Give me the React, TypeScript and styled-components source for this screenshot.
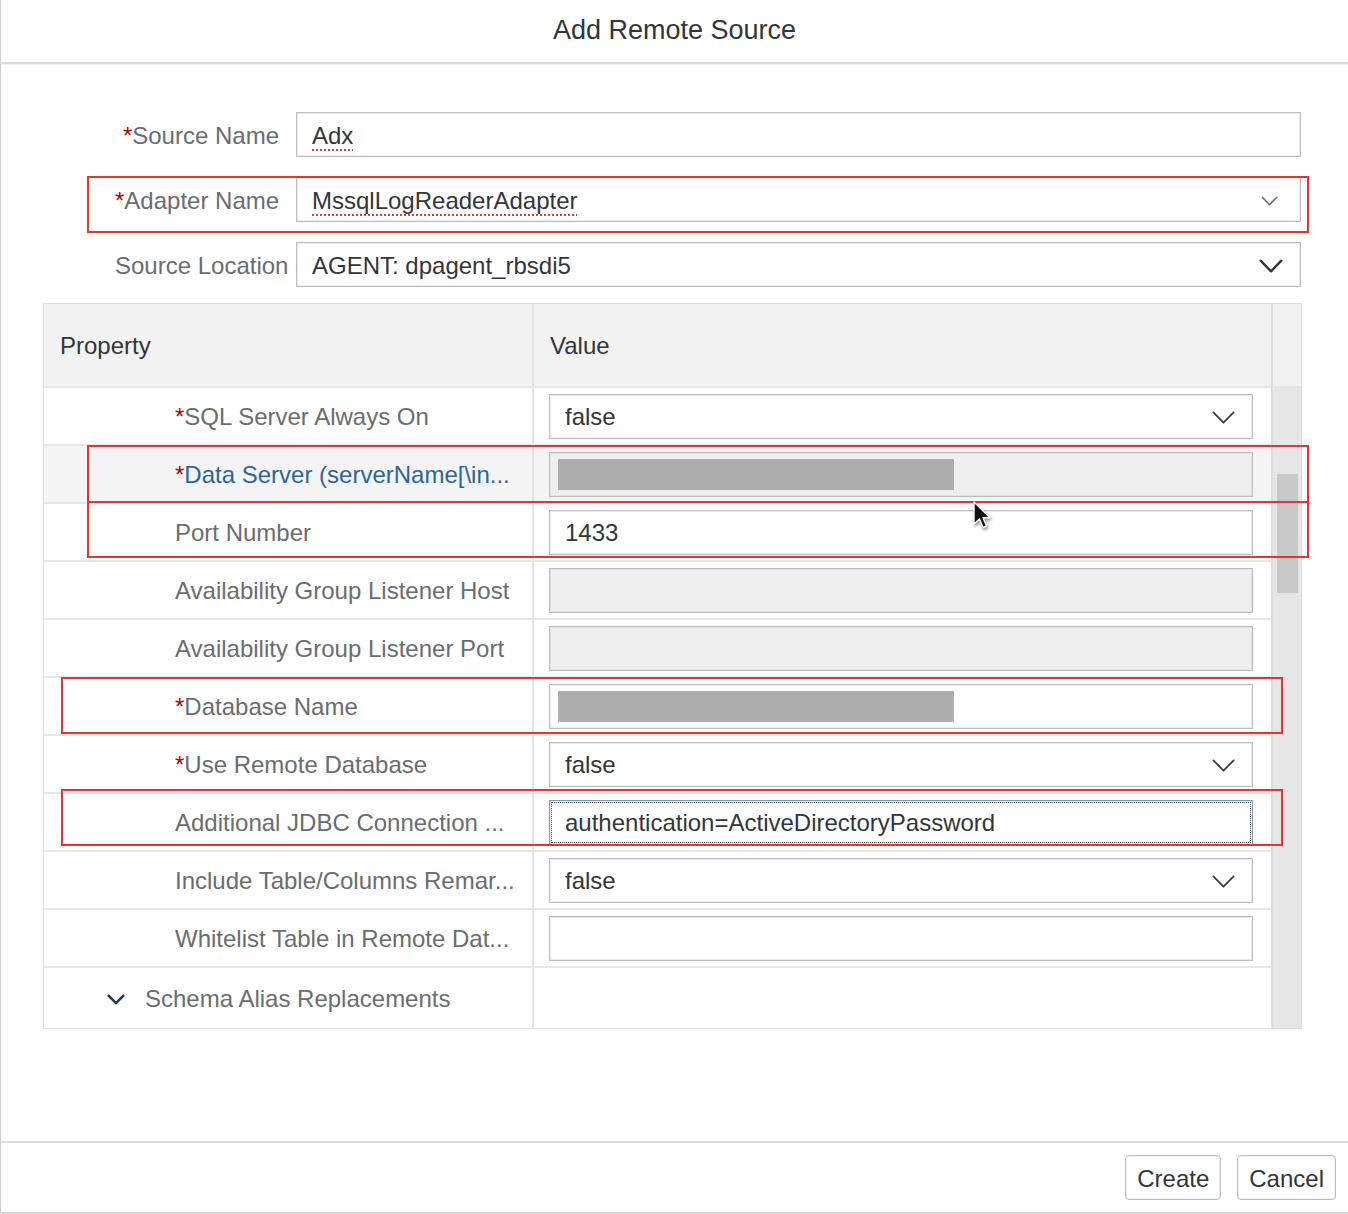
import React from "react";
import styled, { createGlobalStyle } from "styled-components";

const GlobalStyle = createGlobalStyle`
  html, body { margin: 0; padding: 0; background: #ffffff; }
  body { font-family: "Liberation Sans", Arial, sans-serif; }
  * { box-sizing: border-box; }
`;

const Page = styled.div`
  position: relative;
  width: 1348px;
  height: 1214px;
  border-left: 1px solid #cfcfcf;
  border-bottom: 2px solid #d6d6d6;
  display: flex;
  flex-direction: column;
  background: #fff;
  overflow: hidden;
`;

const Header = styled.header`
  height: 64px;
  flex: none;
  display: flex;
  align-items: center;
  justify-content: center;
  border-bottom: 2px solid #dcdcdc;
  box-shadow: 0 1px 1px rgba(0, 0, 0, 0.05);
  font-size: 27px;
  color: #32363a;
  padding-bottom: 1px;
`;

const Body = styled.main`
  flex: 1;
  padding: 48px 47px 0 42px;
`;

const Form = styled.div`
  display: grid;
  grid-template-columns: 164px 1005px;
  column-gap: 17px;
  row-gap: 20px;
  margin-left: 72px;
  align-items: center;
`;

const Label = styled.label`
  font-size: 24px;
  color: #6a6d70;
  text-align: right;
  white-space: nowrap;
  padding-top: 2px;
`;

const Req = styled.span`
  color: #bb0000;
`;

const Field = styled.div<{ $disabled?: boolean; $focused?: boolean; $pr?: number }>`
  height: 45px;
  display: flex;
  align-items: center;
  justify-content: space-between;
  padding: 2px ${(p) => p.$pr ?? 17}px 0 15px;
  font-size: 24px;
  color: #32363a;
  white-space: nowrap;
  background: ${(p) => (p.$disabled ? "#efefef" : "#ffffff")};
  border: 1px solid ${(p) => (p.$focused ? "#7f98b3" : "#bdbdbd")};
  box-shadow: inset 0 0 0 1px ${(p) => (p.$disabled ? "#e2e2e2" : "#ececec")};
  outline: ${(p) => (p.$focused ? "1px dotted #4a4d50" : "none")};
  outline-offset: -3px;
`;

const Spell = styled.span`
  text-decoration: underline dotted #d04040;
  text-decoration-thickness: 2px;
  text-underline-offset: 6px;
`;

const Redacted = styled.span`
  display: block;
  width: 396px;
  height: 31px;
  margin-left: -7px;
  margin-top: -2px;
  background: #adadad;
`;

const Table = styled.div`
  margin-top: 16px;
  width: 1259px;
  display: flex;
  border: 1px solid #dedede;
`;

const Main = styled.div`
  flex: 1;
  display: flex;
  flex-direction: column;
`;

const Row = styled.div<{ $head?: boolean; $hover?: boolean }>`
  display: grid;
  grid-template-columns: 490px 1fr;
  height: ${(p) => (p.$head ? 84 : 58)}px;
  border-bottom: 2px solid #e6e6e6;
  background: ${(p) => (p.$head ? "#f2f2f2" : p.$hover ? "#f4f4f4" : "#ffffff")};
  &:last-child { border-bottom: none; height: 60px; }
`;

const PropCell = styled.div<{ $indent?: number; $head?: boolean }>`
  display: flex;
  align-items: center;
  gap: 20px;
  padding-left: ${(p) => p.$indent ?? 131}px;
  padding-top: 2px;
  border-right: 2px solid #e3e3e3;
  font-size: 24px;
  color: ${(p) => (p.$head ? "#32363a" : "#6a6d70")};
  white-space: nowrap;
`;

const PropText = styled.span<{ $link?: boolean }>`
  color: ${(p) => (p.$link ? "#2f6497" : "inherit")};
`;

const ValueCell = styled.div<{ $head?: boolean }>`
  display: flex;
  flex-direction: column;
  justify-content: center;
  padding: ${(p) => (p.$head ? "2px" : "0")} 18px 0 ${(p) => (p.$head ? 16 : 15)}px;
  font-size: 24px;
  color: #32363a;
`;

const ScrollCol = styled.div`
  width: 30px;
  flex: none;
  display: flex;
  flex-direction: column;
  border-left: 2px solid #dcdcdc;
`;

const ScrollHead = styled.div`
  height: 84px;
  background: #f2f2f2;
  border-bottom: 2px solid #e3e3e3;
`;

const Track = styled.div`
  flex: 1;
  background: #e6e6e6;
  padding: 86px 0 0 4px;
`;

const Thumb = styled.div`
  width: 21px;
  height: 119px;
  background: #c8c8c8;
`;

const Footer = styled.footer`
  height: 71px;
  flex: none;
  border-top: 2px solid #dcdcdc;
  display: flex;
  align-items: center;
  justify-content: flex-end;
  gap: 16px;
  padding-right: 12px;
`;

const Button = styled.button`
  height: 45px;
  padding: 2px 11px 0;
  background: #ffffff;
  border: 1px solid #bdbdbd;
  border-radius: 4px;
  box-shadow: inset 0 0 0 1px #f0f0f0;
  font-family: "Liberation Sans", Arial, sans-serif;
  font-size: 24px;
  color: #32363a;
`;

const Mark = styled.div`
  position: absolute;
  border: 2px solid #e8352b;
  pointer-events: none;
`;

const Cursor = styled.svg`
  position: absolute;
  left: 971px;
  top: 500px;
  filter: drop-shadow(1px 2px 1.5px rgba(0, 0, 0, 0.45));
`;

const Chevron: React.FC<{ w: number; h: number; color: string; sw: number }> = ({ w, h, color, sw }) => (
  <svg width={w} height={h} viewBox={`0 0 ${w} ${h}`} fill="none">
    <path
      d={`M${sw / 2 + 0.5} ${sw / 2 + 0.5} L${w / 2} ${h - sw / 2 - 0.5} L${w - sw / 2 - 0.5} ${sw / 2 + 0.5}`}
      stroke={color}
      strokeWidth={sw}
      strokeLinecap="round"
      strokeLinejoin="round"
    />
  </svg>
);

type PropRow = {
  label: string;
  req?: boolean;
  link?: boolean;
  hover?: boolean;
  kind: "select" | "text" | "disabled" | "redacted" | "redactedDisabled" | "focused";
  value?: string;
};

const rows: PropRow[] = [
  { label: "SQL Server Always On", req: true, kind: "select", value: "false" },
  { label: "Data Server (serverName[\\in...", req: true, link: true, hover: true, kind: "redactedDisabled" },
  { label: "Port Number", kind: "text", value: "1433" },
  { label: "Availability Group Listener Host", kind: "disabled" },
  { label: "Availability Group Listener Port", kind: "disabled" },
  { label: "Database Name", req: true, kind: "redacted" },
  { label: "Use Remote Database", req: true, kind: "select", value: "false" },
  { label: "Additional JDBC Connection ...", kind: "focused", value: "authentication=ActiveDirectoryPassword" },
  { label: "Include Table/Columns Remar...", kind: "select", value: "false" },
  { label: "Whitelist Table in Remote Dat...", kind: "text", value: "" },
];

const renderValue = (r: PropRow) => {
  switch (r.kind) {
    case "select":
      return (
        <Field $pr={17}>
          <span>{r.value}</span>
          <Chevron w={23} h={13} color="#3a3d40" sw={1.8} />
        </Field>
      );
    case "disabled":
      return <Field $disabled />;
    case "redactedDisabled":
      return (
        <Field $disabled>
          <Redacted />
        </Field>
      );
    case "redacted":
      return (
        <Field>
          <Redacted />
        </Field>
      );
    case "focused":
      return (
        <Field $focused>
          <span>{r.value}</span>
        </Field>
      );
    default:
      return (
        <Field>
          <span>{r.value}</span>
        </Field>
      );
  }
};

export default function App() {
  return (
    <>
      <GlobalStyle />
      <Page>
        <Header>Add Remote Source</Header>
        <Body>
          <Form>
            <Label>
              <Req>*</Req>Source Name
            </Label>
            <Field>
              <Spell>Adx</Spell>
            </Field>
            <Label>
              <Req>*</Req>Adapter Name
            </Label>
            <Field $pr={22}>
              <Spell>MssqlLogReaderAdapter</Spell>
              <Chevron w={17} h={10} color="#6a6d70" sw={1.6} />
            </Field>
            <Label>Source Location</Label>
            <Field $pr={17}>
              <span>AGENT: dpagent_rbsdi5</span>
              <Chevron w={24} h={14} color="#32363a" sw={2.4} />
            </Field>
          </Form>

          <Table>
            <Main>
              <Row $head>
                <PropCell $head $indent={16}>Property</PropCell>
                <ValueCell $head>Value</ValueCell>
              </Row>
              {rows.map((r) => (
                <Row key={r.label} $hover={r.hover}>
                  <PropCell>
                    <span>
                      {r.req && <Req>*</Req>}
                      <PropText $link={r.link}>{r.label}</PropText>
                    </span>
                  </PropCell>
                  <ValueCell>{renderValue(r)}</ValueCell>
                </Row>
              ))}
              <Row>
                <PropCell $indent={63}>
                  <Chevron w={18} h={11} color="#1f3b5a" sw={2.6} />
                  <span>Schema Alias Replacements</span>
                </PropCell>
                <ValueCell />
              </Row>
            </Main>
            <ScrollCol>
              <ScrollHead />
              <Track>
                <Thumb />
              </Track>
            </ScrollCol>
          </Table>
        </Body>
        <Footer>
          <Button>Create</Button>
          <Button>Cancel</Button>
        </Footer>

        <Mark style={{ left: 86, top: 176, width: 1222, height: 57 }} />
        <Mark style={{ left: 86, top: 445, width: 1222, height: 58 }} />
        <Mark style={{ left: 86, top: 501, width: 1222, height: 57 }} />
        <Mark style={{ left: 60, top: 677, width: 1222, height: 57 }} />
        <Mark style={{ left: 60, top: 789, width: 1222, height: 57 }} />

        <Cursor width="20" height="30" viewBox="0 0 20 30">
          <path d="M2 2 L2 24 L7.5 19 L11 27.5 L14.5 26 L11 17.8 L18 17.8 Z" fill="#111" stroke="#fff" strokeWidth="1.4" strokeLinejoin="round" />
        </Cursor>
      </Page>
    </>
  );
}
